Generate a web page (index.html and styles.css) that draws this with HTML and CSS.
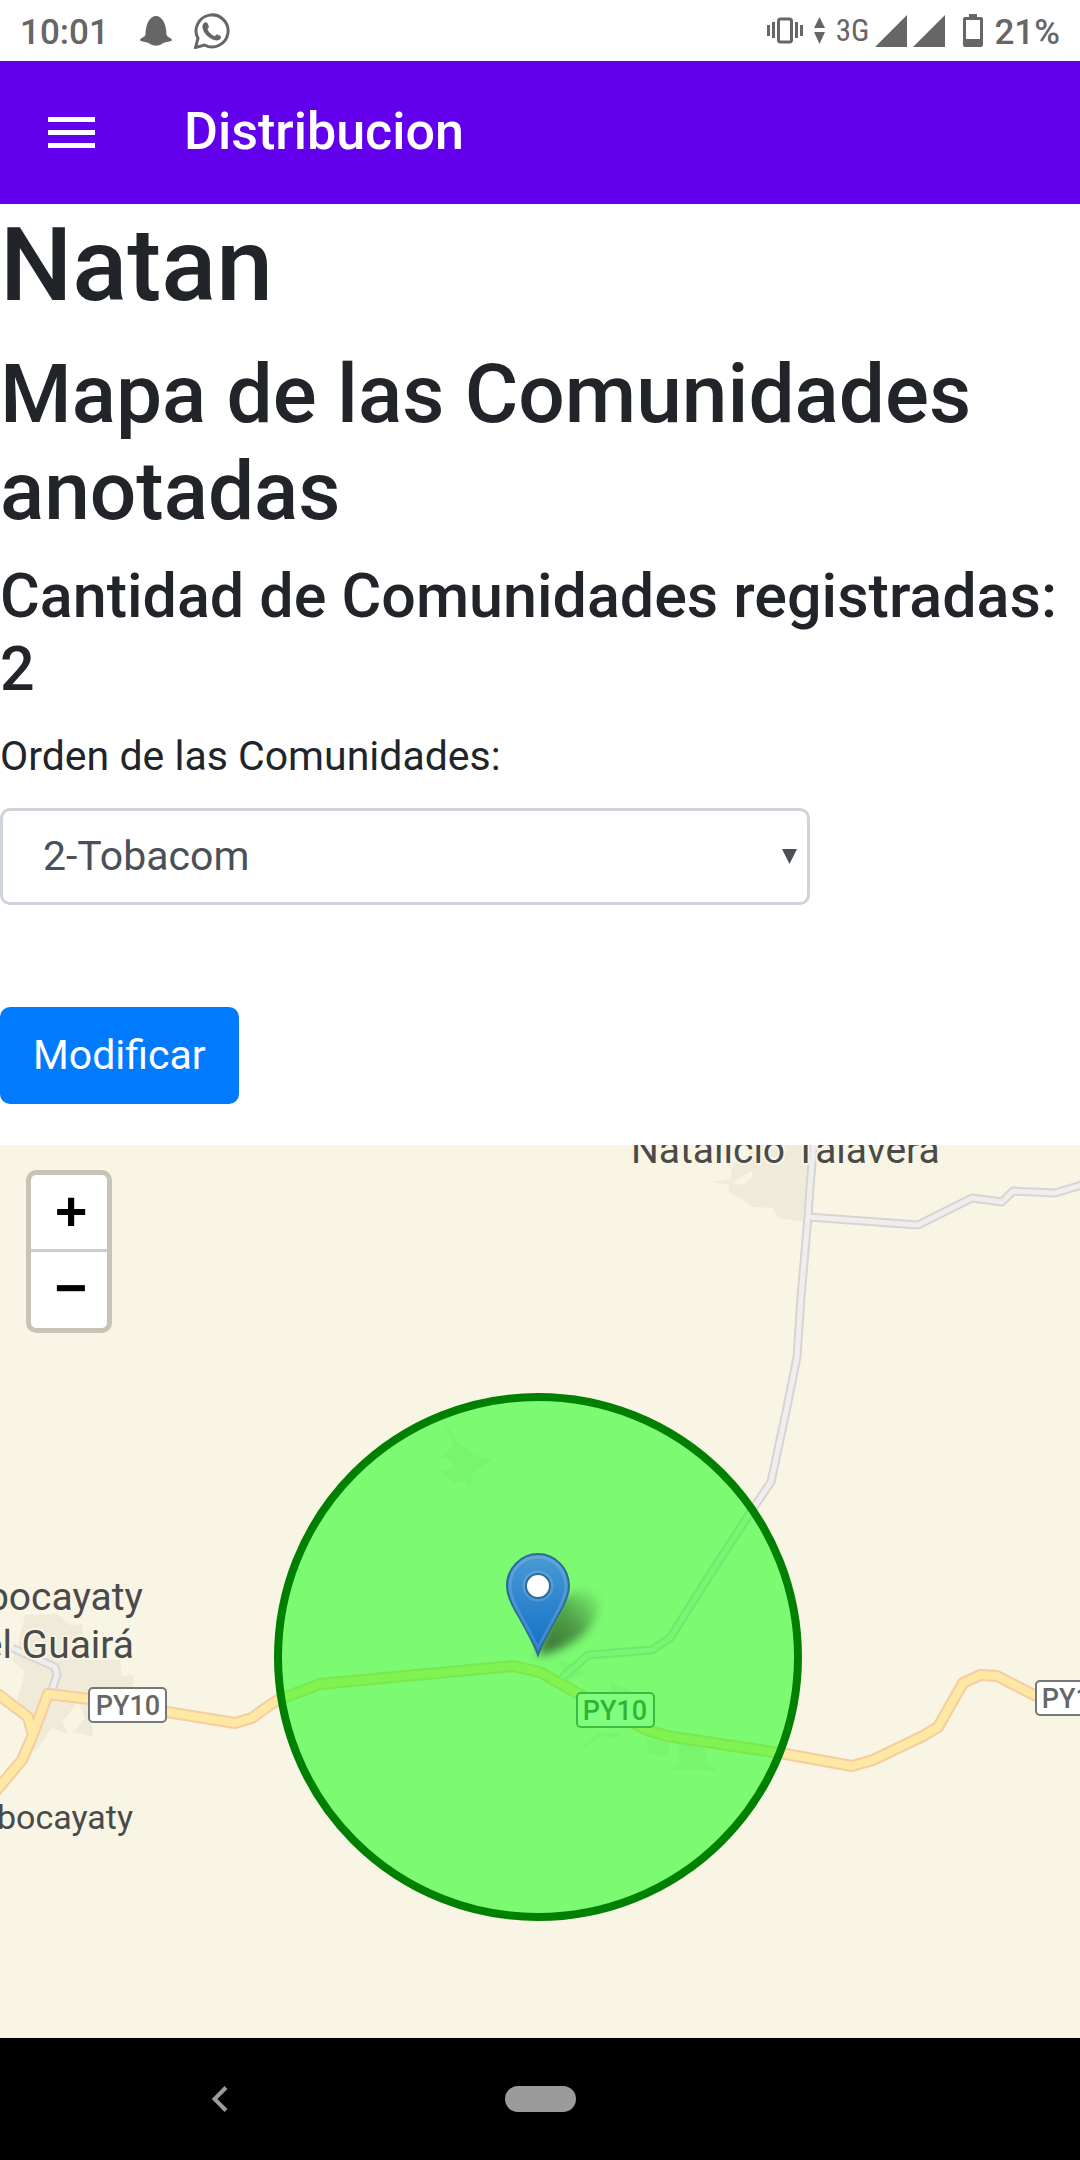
FILE: index.html
```html
<!DOCTYPE html>
<html lang="es">
<head>
<meta charset="utf-8">
<meta name="viewport" content="width=device-width, initial-scale=1">
<title>Distribucion</title>
<link rel="stylesheet" href="styles.css">
</head>
<body>
<div class="screen">
  <div class="status">
    <div class="status-left">
      <span class="status-text">10:01</span>
      <svg class="ghost" width="32" height="30" viewBox="0 0 32 30" aria-hidden="true"><path d="M16 0C10 0 5.500 8 5.500 18.500C5.500 21 0 22 0 24C0 26 8 25.500 10 28Q16 31.500 22 28C24 25.500 32 26 32 24C32 22 26.500 21 26.500 18.500C26.500 8 22 0 16 0Z"/></svg>
      <svg class="whatsapp" width="36" height="36" viewBox="0 0 36 36" aria-hidden="true"><path class="line" d="M1.500 34.500L4 25.500A16 16 0 1 1 10.500 32Z"/><path d="M9.500 10.500C11 8.800 13 9 13.600 10.500L14.900 13.600C15.200 14.500 13.400 16 13.600 16.500C15 19.500 17.600 21.900 20.600 23.200C21.300 23.400 22.500 21.100 23.300 21.400L26.600 23C27.500 23.500 27 26 25.400 26.700C22 28.600 16.600 26.300 13 22.700C9.300 19 6.900 13.500 9.500 10.500Z"/></svg>
    </div>
    <div class="status-right">
      <svg width="36" height="27" viewBox="0 0 36 27" aria-hidden="true"><path d="M0 8h3v11H0zM5 5h3v16H5zM28 5h3v16h-3zM33 8h3v11h-3z"/><rect class="line" x="11.500" y="2" width="13" height="23" rx="2"/></svg>
      <svg width="11" height="27" viewBox="0 0 11 27" aria-hidden="true"><path d="M0 11L5.500 0L11 11zM0 15L5.500 27L11 15z"/></svg>
      <span class="network">3G</span>
      <span class="signals">
        <svg width="32" height="32" viewBox="0 0 32 32" aria-hidden="true"><path d="M0 32L32 0V32z"/></svg>
        <svg width="32" height="32" viewBox="0 0 32 32" aria-hidden="true"><path d="M0 32L32 0V32z"/></svg>
      </span>
      <svg class="battery" width="20" height="33" viewBox="0 0 20 33" aria-hidden="true"><path fill-rule="evenodd" d="M6 0h8v3h4a2 2 0 0 1 2 2v26a2 2 0 0 1-2 2H2a2 2 0 0 1-2-2V5a2 2 0 0 1 2-2h4zM3 6v19h14V6z"/></svg>
      <span class="status-text">21%</span>
    </div>
  </div>

  <header class="appbar">
    <button class="menu" type="button" aria-label="Abrir menú"><svg width="47" height="31" viewBox="0 0 47 31" aria-hidden="true"><path d="M0 0h47v5H0zM0 13h47v5H0zM0 26h47v5H0z"/></svg></button>
    <span class="appbar-title">Distribucion</span>
  </header>

  <main class="content">
    <h1>Natan</h1>
    <h2>Mapa de las Comunidades anotadas</h2>
    <h3>Cantidad de Comunidades registradas: 2</h3>
    <form class="order">
      <label for="orden">Orden de las Comunidades:</label>
      <div class="select-box">
        <select id="orden"><option>2-Tobacom</option></select>
        <svg class="arrow" width="15" height="15" viewBox="0 0 15 15" aria-hidden="true"><path d="M0 0h15L7.500 15z"/></svg>
      </div>
      <button class="submit" type="button">Modificar</button>
    </form>

    <section class="map" aria-label="Mapa">
      <svg class="map-canvas" viewBox="0 1145 1080 893" preserveAspectRatio="xMidYMid slice">
        <defs>
          <linearGradient id="pin" x1="0" y1="0" x2="0" y2="1"><stop offset="0" stop-color="#4a9ad4"/><stop offset="1" stop-color="#126fc6"/></linearGradient>
          <linearGradient id="shade" gradientUnits="userSpaceOnUse" x1="540" y1="1654" x2="600" y2="1592"><stop offset="0" stop-color="#000" stop-opacity=".55"/><stop offset=".5" stop-color="#000" stop-opacity=".38"/><stop offset="1" stop-color="#000" stop-opacity="0"/></linearGradient>
          <filter id="soft" x="-30%" y="-30%" width="160%" height="160%"><feGaussianBlur stdDeviation="5"/></filter>
        </defs>
        <g class="town">
          <path fill-rule="evenodd" d="M733 1165L730 1180L711 1181L729 1185V1192L753 1207L773 1208L778 1218L806 1222L812 1145H760ZM752 1171L732 1183L743 1185L752 1177Z"/>
          <path d="M25 1615L57 1614L70 1625L83 1624L82 1640L90 1660H120L122 1676L134 1675L131 1700L90 1697L93 1737L74 1732L85 1718L78 1702L62 1722L68 1734L52 1728L34 1753L24 1715L17 1700L25 1672L12 1660L18 1645Z"/>
          <path d="M443 1420L458 1443L473 1454L492 1460L473 1473L470 1488L466 1481L454 1484L440 1471L453 1469L452 1460L440 1457L454 1446Z"/>
          <path d="M560 1659L587 1672L570 1680L562 1674ZM610 1682L630 1690V1700H612ZM576 1752L598 1733H624L614 1739L604 1735ZM645 1740L670 1742L667 1757L650 1753ZM678 1743L707 1749L706 1762L718 1771L670 1769L679 1765Z"/>
        </g>
        <g class="road-case">
          <path d="M814 1140L810 1187L808 1217L801 1297L797 1357L787 1407L771 1482L754 1507L713 1570L670 1638L652 1650L588 1655L562 1678"/>
          <path d="M808 1217L918 1225L972 1198L1002 1202L1013 1191L1055 1193L1085 1184"/>
          <path d="M12 1648L55 1667L57 1675L52 1690"/>
        </g>
        <g class="road-fill">
          <path d="M814 1140L810 1187L808 1217L801 1297L797 1357L787 1407L771 1482L754 1507L713 1570L670 1638L652 1650L588 1655L562 1678"/>
          <path d="M808 1217L918 1225L972 1198L1002 1202L1013 1191L1055 1193L1085 1184"/>
          <path d="M12 1648L55 1667L57 1675L52 1690"/>
        </g>
        <g class="route-case">
          <path d="M-5 1692L28 1717L32 1732"/>
          <path d="M-5 1792L22 1760L32 1737L48 1694L90 1699L167 1712L235 1723L252 1718L267 1707L278 1700L320 1684L513 1666L540 1672L577 1693L647 1730L667 1736L780 1753L852 1766L873 1760L923 1736L938 1727L963 1683L980 1675L997 1676L1040 1698L1090 1700"/>
        </g>
        <g class="route-fill">
          <path d="M-5 1692L28 1717L32 1732"/>
          <path d="M-5 1792L22 1760L32 1737L48 1694L90 1699L167 1712L235 1723L252 1718L267 1707L278 1700L320 1684L513 1666L540 1672L577 1693L647 1730L667 1736L780 1753L852 1766L873 1760L923 1736L938 1727L963 1683L980 1675L997 1676L1040 1698L1090 1700"/>
        </g>
        <g class="place">
          <text x="631" y="1163">Natalicio Talavera</text>
          <text class="end" x="143" y="1610">Mbocayaty</text>
          <text class="end" x="134" y="1658">del Guairá</text>
          <text class="end small" x="133" y="1829">Mbocayaty</text>
        </g>
        <g class="shield">
          <rect x="89" y="1688" width="77" height="34" rx="4"/><text x="128" y="1715">PY10</text>
          <rect x="577" y="1693" width="77" height="34" rx="4"/><text x="615" y="1720">PY10</text>
          <rect x="1036" y="1681" width="77" height="34" rx="4"/><text x="1074" y="1708">PY10</text>
        </g>
        <circle class="area" cx="538" cy="1657" r="260"/>
        <path d="M538 1656L545 1630L562 1598Q578 1588 592 1594Q608 1606 584 1634Q566 1650 538 1656Z" fill="url(#shade)" filter="url(#soft)"/>
        <path d="M538 1655C533 1641 523 1624 515 1610C510 1601 507 1594 507 1586A31 32 0 0 1 569 1586C569 1594 566 1601 561 1610C553 1624 543 1641 538 1655Z" fill="url(#pin)" stroke="#2e6c97" stroke-width="2"/>
        <path d="M538 1648C533 1637 524 1622 517 1609C513 1601 510 1594 510 1586A28 29 0 0 1 566 1586C566 1594 563 1601 559 1609C552 1622 543 1637 538 1648Z" fill="none" stroke="#fff" stroke-opacity=".14" stroke-width="3"/>
        <circle cx="538" cy="1586" r="14" fill="none" stroke="#fff" stroke-opacity=".14" stroke-width="3"/>
        <circle cx="538" cy="1586" r="12" fill="#fff" stroke="#2e6c97" stroke-width="2"/>
      </svg>
      <div class="zoom">
        <button type="button" aria-label="Acercar">+</button>
        <button type="button" aria-label="Alejar">−</button>
      </div>
    </section>
  </main>

  <nav class="navbar" aria-label="Sistema">
    <button class="back" type="button" aria-label="Atrás"><svg width="16" height="26" viewBox="0 0 16 26" aria-hidden="true"><path d="M14 1.500L2.500 13L14 24.500"/></svg></button>
    <button class="home" type="button" aria-label="Inicio"></button>
  </nav>
</div>
</body>
</html>
```
FILE: styles.css
```css
* { box-sizing: border-box; }

body {
  margin: 0;
  background: #fff;
  color: #212529;
  font-family: Roboto, "Liberation Sans", sans-serif;
  font-size: 41px;
  line-height: 61px;
}

button {
  margin: 0;
  padding: 0;
  border: 0;
  background: none;
  font: inherit;
}

svg { display: block; flex: none; }

.screen {
  display: flex;
  flex-direction: column;
  min-height: 100vh;
}

/* Status bar */
.status {
  display: flex;
  justify-content: space-between;
  height: 61px;
  padding: 0 20px;
  color: #666;
  fill: #666;
}
.status-left, .status-right { display: flex; align-items: center; }
.status-text {
  padding-top: 4px;
  font-size: 35px;
  font-weight: 500;
}
.status .line { fill: none; stroke: #666; stroke-width: 3; }
.ghost { margin-left: 31px; }
.whatsapp { margin-left: 22px; }
.status-right { gap: 11px; }
.network {
  font-family: "Roboto Condensed", Roboto, sans-serif;
  font-size: 31px;
}
.signals { display: flex; gap: 6px; margin-left: -5px; }
.battery { margin-left: 7px; }

/* App bar */
.appbar {
  display: flex;
  align-items: center;
  gap: 89px;
  height: 143px;
  padding: 0 48px;
  background: #6200ee;
  color: #fff;
}
.menu svg { fill: #fff; }
.appbar-title {
  padding-bottom: 2px;
  font-size: 52px;
  font-weight: 500;
}

/* Content */
.content { display: flex; flex: 1; flex-direction: column; }
h1, h2, h3 { margin: 0 0 20px; font-weight: 500; }
h1 { font-size: 102px; line-height: 122px; }
h2 { font-size: 82px; line-height: 97px; }
h3 { font-size: 61px; line-height: 73px; }

.order {
  display: flex;
  flex-direction: column;
  align-items: flex-start;
}
.select-box {
  position: relative;
  width: 75%;
  margin: 21px 0 102px;
}
select {
  display: block;
  width: 100%;
  height: 97px;
  padding: 0 40px;
  appearance: none;
  border: 3px solid #ced4da;
  border-radius: 10px;
  background: #fff;
  color: #495057;
  font: inherit;
}
.arrow {
  position: absolute;
  top: 41px;
  right: 13px;
  fill: #495057;
  pointer-events: none;
}
.submit {
  height: 97px;
  padding: 0 33px;
  border-radius: 10px;
  background: #007bff;
  color: #fff;
}

/* Map */
.map {
  position: relative;
  flex: 1;
  min-height: 600px;
  margin-top: 41px;
  overflow: hidden;
  background: #f9f5e5;
}
.map-canvas {
  position: absolute;
  width: 100%;
  height: 100%;
}
.town { fill: #f0ead9; }
.road-case, .road-fill, .route-case, .route-fill {
  fill: none;
  stroke-linejoin: round;
}
.road-case { stroke: #d8d4d1; stroke-width: 9; }
.road-fill { stroke: #efeded; stroke-width: 5; }
.route-case { stroke: #f4cda0; stroke-width: 12; }
.route-fill { stroke: #fee8a3; stroke-width: 8; }
.place {
  fill: #4a4a4a;
  stroke: #f9f5e5;
  stroke-width: 4;
  stroke-linejoin: round;
  paint-order: stroke;
  font-size: 39px;
}
.place .end { text-anchor: end; }
.place .small { font-size: 34px; }
.shield rect { fill: #fff; stroke: #777; stroke-width: 2; }
.shield text {
  fill: #666;
  font-size: 27px;
  font-weight: 500;
  text-anchor: middle;
}
.area {
  fill: #0f0;
  fill-opacity: .5;
  stroke: #008000;
  stroke-width: 8;
}

.zoom {
  position: absolute;
  top: 25px;
  left: 26px;
  display: flex;
  flex-direction: column;
  width: 86px;
  border: 5px solid rgba(0, 0, 0, .2);
  border-radius: 10px;
  background: #fff;
  background-clip: padding-box;
}
.zoom button {
  height: 76px;
  padding: 0 0 4px 4px;
  color: #000;
  font: bold 56px/72px "Liberation Sans", sans-serif;
}
.zoom button:first-child {
  height: 77px;
  border-bottom: 3px solid #ccc;
}

/* System navigation */
.navbar {
  display: grid;
  grid-template-columns: 1fr 71px 1fr;
  align-items: center;
  height: 122px;
  background: #000;
}
.navbar button { justify-self: center; }
.navbar path { fill: none; stroke: #9b9b9b; stroke-width: 4; }
.navbar .back { padding-right: 64px; }
.navbar .home {
  width: 71px;
  height: 26px;
  border-radius: 13px;
  background: #9b9b9b;
}
```
